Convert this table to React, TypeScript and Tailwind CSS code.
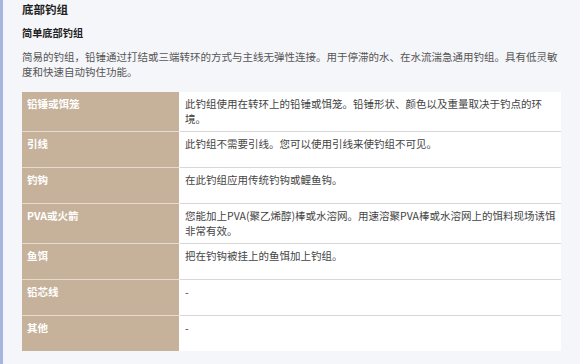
import React from 'react';

const ROWS: { label: string; text: string }[] = [
  { label: '铅锤或饵笼', text: '此钓组使用在转环上的铅锤或饵笼。铅锤形状、颜色以及重量取决于钓点的环境。' },
  { label: '引线', text: '此钓组不需要引线。您可以使用引线来使钓组不可见。' },
  { label: '钓钩', text: '在此钓组应用传统钓钩或鲤鱼钩。' },
  { label: 'PVA或火箭', text: '您能加上PVA(聚乙烯醇)棒或水溶网。用速溶聚PVA棒或水溶网上的饵料现场诱饵非常有效。' },
  { label: '鱼饵', text: '把在钓钩被挂上的鱼饵加上钓组。' },
  { label: '铅芯线', text: '-' },
  { label: '其他', text: '-' },
];

const App: React.FC = () => {
  return (
    <div
      className="flex min-h-[364px] w-[580px] bg-[#f5f6fa]"
      style={{ fontFamily: '"Noto Sans CJK SC", "Noto Sans", sans-serif' }}
    >
      <div className="w-[3px] shrink-0 bg-[#aab5df]" />
      <div className="flex-1 px-[19px]">
        <h1 className="pt-[1px] text-[11.5px] font-bold leading-[16px] text-[#222]">底部钓组</h1>
        <h2 className="mt-[8px] text-[10.2px] font-bold leading-[16px] text-[#222]">简单底部钓组</h2>
        <p className="mt-[8px] text-[10.5px] leading-[15px] text-[#555]">
          简易的钓组，铅锤通过打结或三端转环的方式与主线无弹性连接。用于停滞的水、在水流湍急通用钓组。具有低灵敏度和快速自动钩住功能。
        </p>

        <div className="mt-[13px] bg-white">
          {ROWS.map((row, i) => (
            <div key={row.label} className="flex min-h-[36px]">
              <div
                className={`w-[158px] shrink-0 border-r border-white bg-[#c6b29a] px-[5px] pt-[4px] pb-[5px] text-[10.5px] font-bold leading-[15px] text-white ${
                  i > 0 ? 'border-t border-t-[#e4dace]' : ''
                }`}
              >
                {row.label}
              </div>
              <div
                className={`flex-1 px-[5px] pt-[4px] pb-[5px] text-[10.5px] leading-[15px] text-[#444] ${
                  i > 0 ? 'border-t border-t-[#d8d8d8]' : ''
                }`}
              >
                {row.text}
              </div>
            </div>
          ))}
        </div>
      </div>
    </div>
  );
};

export default App;
